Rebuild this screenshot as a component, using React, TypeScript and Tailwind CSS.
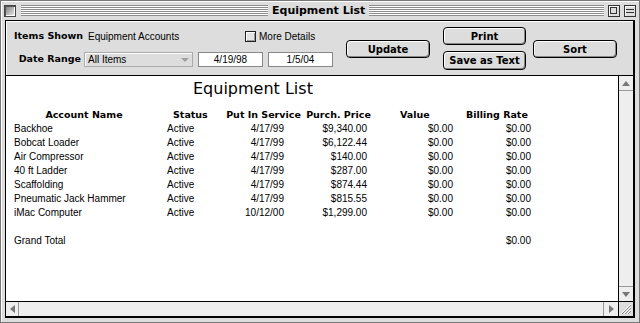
import { Fragment } from "react";

const rows = [
  ["Backhoe", "Active", "4/17/99", "$9,340.00", "$0.00", "$0.00"],
  ["Bobcat Loader", "Active", "4/17/99", "$6,122.44", "$0.00", "$0.00"],
  ["Air Compressor", "Active", "4/17/99", "$140.00", "$0.00", "$0.00"],
  ["40 ft Ladder", "Active", "4/17/99", "$287.00", "$0.00", "$0.00"],
  ["Scaffolding", "Active", "4/17/99", "$874.44", "$0.00", "$0.00"],
  ["Pneumatic Jack Hammer", "Active", "4/17/99", "$815.55", "$0.00", "$0.00"],
  ["iMac Computer", "Active", "10/12/00", "$1,299.00", "$0.00", "$0.00"],
];

const regular = "font-['Liberation_Sans',Arial,sans-serif] text-[10px]";
const bold = "font-['DejaVu_Sans',sans-serif] font-bold";

const Stripes = ({ className }: { className: string }) => (
  <div
    className={`h-[11px] bg-[repeating-linear-gradient(to_bottom,#8c8c8c_0px,#8c8c8c_1px,#ffffff_1px,#ffffff_2px)] ${className}`}
  />
);

const MacButton = ({ label, className }: { label: string; className: string }) => (
  <button
    className={`flex items-center justify-center rounded-[4px] border border-black bg-[#dddddd] shadow-[inset_1px_1px_0_#ffffff,inset_-1px_-1px_0_#888888] text-[10px] text-black ${bold} ${className}`}
  >
    {label}
  </button>
);

export default function App() {
  return (
    <div className="w-[640px] h-[323px] bg-[#dddddd] border border-[#777777] shadow-[inset_1px_1px_0_#ffffff] flex flex-col overflow-hidden whitespace-nowrap">
      {/* title bar */}
      <div className="h-[19px] flex items-center px-[3px]">
        <div className="w-[12px] h-[12px] border border-[#444444] bg-[linear-gradient(135deg,#777777,#eeeeee)] shadow-[inset_1px_1px_0_#555555,inset_-1px_-1px_0_#ffffff]" />
        <Stripes className="ml-[5px] w-[247px]" />
        <div className={`px-[4px] text-[11px] leading-[19px] text-black ${bold}`}>Equipment List</div>
        <Stripes className="flex-1" />
        <div className="ml-[4px] w-[12px] h-[12px] border border-[#333333] bg-[#dddddd] shadow-[inset_1px_1px_0_#ffffff] relative">
          <div className="absolute left-[1px] top-[1px] w-[7px] h-[7px] border border-[#333333]" />
        </div>
        <div className="ml-[4px] w-[12px] h-[12px] border border-[#333333] bg-[#dddddd] shadow-[inset_1px_1px_0_#ffffff] flex flex-col justify-center gap-[2px] px-[1px]">
          <div className="h-px bg-[#333333]" />
          <div className="h-px bg-[#333333]" />
        </div>
      </div>

      {/* window content */}
      <div className="ml-[4px] w-[630px] h-[298px] border-l border-t border-r-2 border-b-2 border-black flex flex-col">
        {/* header panel */}
        <div className="h-[55px] border-b border-black bg-[#dddddd] shadow-[inset_1px_1px_0_#ffffff] flex items-start">
          <div className="ml-[8px] pt-[9px] flex flex-col">
            <div className="h-[12px] flex items-center">
              <div className={`w-[68px] text-right text-[9.5px] text-black ${bold}`}>Items Shown</div>
              <div className={`ml-[6px] w-[157px] text-black ${regular}`}>Equipment Accounts</div>
              <div className="w-[11px] h-[11px] border border-[#222222] bg-[#e4e4e4] shadow-[inset_1px_1px_0_#ffffff,inset_-1px_-1px_0_#999999]" />
              <div className={`ml-[3px] text-black ${regular}`}>More Details</div>
            </div>
            <div className="mt-[10px] h-[15px] flex items-center">
              <div className={`w-[67px] text-right text-[9.5px] text-black ${bold}`}>Date Range</div>
              <div className="ml-[3px] w-[109px] h-[15px] border border-[#aaaaaa] bg-[#dddddd] shadow-[inset_1px_1px_0_#ffffff] flex items-center pl-[3px] pr-[3px]">
                <span className={`flex-1 text-black ${regular}`}>All Items</span>
                <svg width="8" height="4" viewBox="0 0 8 4">
                  <path d="M0 0H8L4 4Z" fill="#a0a0a0" />
                </svg>
              </div>
              <div className={`ml-[5px] w-[65px] h-[15px] border border-[#888888] bg-white flex items-center justify-center text-black ${regular}`}>
                4/19/98
              </div>
              <div className={`ml-[5px] w-[65px] h-[15px] border border-[#888888] bg-white flex items-center justify-center text-black ${regular}`}>
                1/5/04
              </div>
            </div>
          </div>
          <MacButton label="Update" className="ml-[13px] mt-[19px] w-[84px] h-[18px]" />
          <div className="ml-[13px] mt-[6px] flex flex-col gap-[6px]">
            <MacButton label="Print" className="w-[83px] h-[18px]" />
            <MacButton label="Save as Text" className="w-[83px] h-[19px]" />
          </div>
          <MacButton label="Sort" className="ml-[7px] mt-[19px] w-[84px] h-[18px]" />
        </div>

        {/* report + vertical scrollbar */}
        <div className="h-[225px] flex">
          <div className="flex-1 bg-white">
            <div className="mt-[3px] h-[20px] leading-[20px] pl-[187px] font-['DejaVu_Sans',sans-serif] text-[16px] text-black">
              Equipment List
            </div>
            <div className="mt-[8px] ml-[8px] grid grid-cols-[140px_68px_83px_67px_88px_75px] auto-rows-[14px] leading-[15px] text-black">
              <div className={`text-center text-[9.5px] ${bold}`}>Account Name</div>
              <div className={`pl-[19px] text-[9.5px] ${bold}`}>Status</div>
              <div className={`text-center text-[9.5px] ${bold}`}>Put In Service</div>
              <div className={`text-center text-[9.5px] ${bold}`}>Purch. Price</div>
              <div className={`pl-[28px] text-[9.5px] ${bold}`}>Value</div>
              <div className={`pl-[6px] text-[9.5px] ${bold}`}>Billing Rate</div>
              {rows.map((r) => (
                <Fragment key={r[0]}>
                  <div className={regular}>{r[0]}</div>
                  <div className={`pl-[13px] ${regular}`}>{r[1]}</div>
                  <div className={`text-right pr-[21px] ${regular}`}>{r[2]}</div>
                  <div className={`text-right pr-[5px] ${regular}`}>{r[3]}</div>
                  <div className={`text-right pr-[7px] ${regular}`}>{r[4]}</div>
                  <div className={`text-right pr-[4px] ${regular}`}>{r[5]}</div>
                </Fragment>
              ))}
              <div className="col-span-6" />
              <div className={`col-span-5 ${regular}`}>Grand Total</div>
              <div className={`text-right pr-[4px] ${regular}`}>$0.00</div>
            </div>
          </div>
          <div className="w-[15px] border-l border-black bg-[#eeeeee] flex flex-col">
            <div className="h-[15px] border-b border-[#999999] flex items-center justify-center">
              <svg width="8" height="5" viewBox="0 0 8 5">
                <path d="M4 0L8 5H0Z" fill="#777777" />
              </svg>
            </div>
            <div className="flex-1" />
            <div className="h-[15px] border-t border-[#999999] flex items-center justify-center">
              <svg width="8" height="5" viewBox="0 0 8 5">
                <path d="M0 0H8L4 5Z" fill="#777777" />
              </svg>
            </div>
          </div>
        </div>

        {/* horizontal scrollbar */}
        <div className="h-[15px] border-t border-black bg-[#eeeeee] flex">
          <div className="w-[13px] border-r border-[#999999] flex items-center justify-center">
            <svg width="5" height="8" viewBox="0 0 5 8">
              <path d="M0 4L5 0V8Z" fill="#777777" />
            </svg>
          </div>
          <div className="flex-1" />
          <div className="w-[15px] border-l border-[#999999] flex items-center justify-center">
            <svg width="5" height="8" viewBox="0 0 5 8">
              <path d="M5 4L0 0V8Z" fill="#777777" />
            </svg>
          </div>
          <div className="w-[15px] border-l border-black bg-[#dddddd] flex items-center justify-center">
            <svg width="12" height="12" viewBox="0 0 12 12">
              <path d="M1 11L11 1M4 11L11 4M7 11L11 7" stroke="#ffffff" strokeWidth="1" />
              <path d="M2 11L11 2M5 11L11 5M8 11L11 8" stroke="#888888" strokeWidth="1" />
            </svg>
          </div>
        </div>
      </div>
    </div>
  );
}
